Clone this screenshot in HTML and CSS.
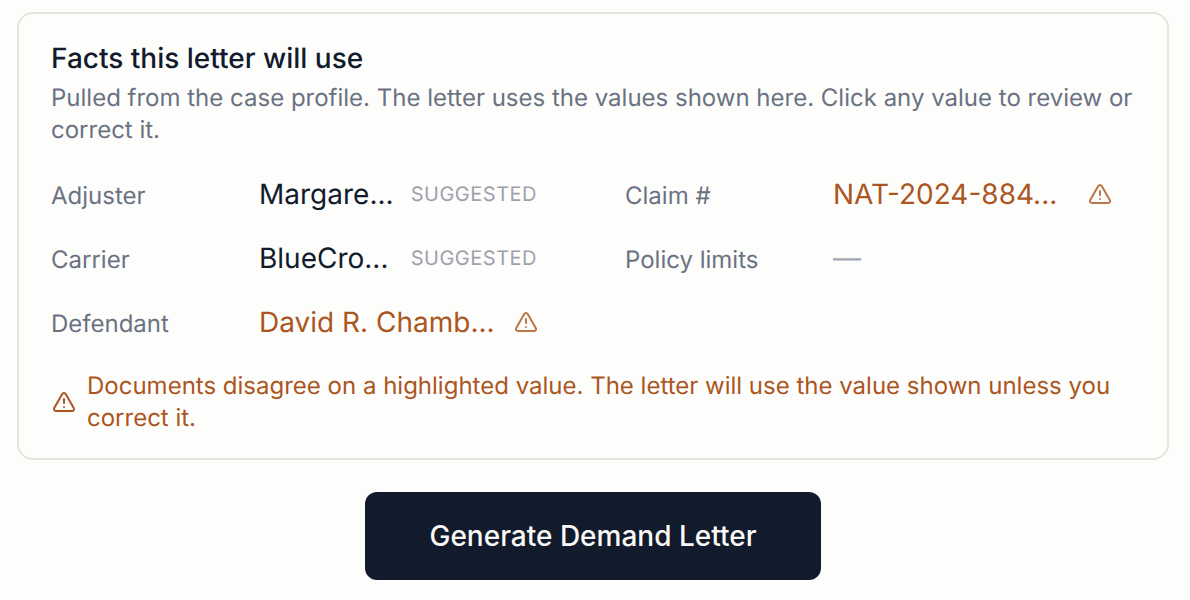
FILE: index.html
```html
<!DOCTYPE html>
<html lang="en">
<head>
  <meta charset="UTF-8">
  <meta name="viewport" content="width=device-width, initial-scale=1">
  <title>Demand Letter</title>
  <link rel="stylesheet" href="styles.css">
</head>
<body>
  <!-- Facts card -->
  <section class="card">
    <h2>Facts this letter will use</h2>
    <p class="intro">Pulled from the case profile. The letter uses the values shown here. Click any value to review or correct it.</p>

    <div class="facts">
      <div class="fact">
        <span class="label">Adjuster</span>
        <span class="value">Margare...</span>
        <span class="tag">SUGGESTED</span>
      </div>
      <div class="fact">
        <span class="label">Claim #</span>
        <span class="value conflict">NAT-2024-884...</span>
        <svg class="icon" viewBox="0 0 24 24"><path d="m21.73 18-8-14a2 2 0 0 0-3.48 0l-8 14A2 2 0 0 0 4 21h16a2 2 0 0 0 1.73-3"/><path d="M12 9v4"/><path d="M12 17h.01"/></svg>
      </div>
      <div class="fact">
        <span class="label">Carrier</span>
        <span class="value">BlueCro...</span>
        <span class="tag">SUGGESTED</span>
      </div>
      <div class="fact">
        <span class="label">Policy limits</span>
        <span class="value empty">—</span>
      </div>
      <div class="fact">
        <span class="label">Defendant</span>
        <span class="value conflict">David R. Chamb...</span>
        <svg class="icon" viewBox="0 0 24 24"><path d="m21.73 18-8-14a2 2 0 0 0-3.48 0l-8 14A2 2 0 0 0 4 21h16a2 2 0 0 0 1.73-3"/><path d="M12 9v4"/><path d="M12 17h.01"/></svg>
      </div>
    </div>

    <div class="notice">
      <svg class="icon" viewBox="0 0 24 24"><path d="m21.73 18-8-14a2 2 0 0 0-3.48 0l-8 14A2 2 0 0 0 4 21h16a2 2 0 0 0 1.73-3"/><path d="M12 9v4"/><path d="M12 17h.01"/></svg>
      <p>Documents disagree on a highlighted value. The letter will use the value shown unless you correct it.</p>
    </div>
  </section>

  <button class="generate-btn">Generate Demand Letter</button>
</body>
</html>
```
FILE: styles.css
```css
* {
  box-sizing: border-box;
  margin: 0;
  padding: 0;
}
body {
  background: #fdfdfc;
  font-family: Inter, "Liberation Sans", sans-serif;
  text-rendering: geometricPrecision;
  color: #121b2b;
  display: flex;
  flex-direction: column;
  align-items: center;
  padding: 12px 21px 20px 17px;
}
/* Facts card */
.card {
  width: 100%;
  height: 448px;
  border: 2px solid #e7e4e0;
  border-radius: 16px;
  padding: 24px 32px;
  margin-bottom: 32px;
}
h2 {
  font-size: 28px;
  font-weight: 500;
  line-height: 40px;
}
.intro {
  margin-top: 4px;
  font-size: 24px;
  line-height: 32px;
  color: #6a7282;
}
.facts {
  display: grid;
  grid-template-columns: 487px 487px;
  column-gap: 87px;
  row-gap: 24px;
  margin-top: 28px;
}
.fact {
  display: flex;
  align-items: center;
  height: 40px;
}
.label {
  width: 208px;
  padding-top: 2px;
  font-size: 24px;
  color: #6a7282;
}
.value {
  flex: 1;
  font-size: 28px;
  white-space: nowrap;
}
.value.conflict,
.notice {
  color: #ab561e;
}
.value.empty {
  color: #a3a8b3;
}
.tag {
  margin-right: 1px;
  font-size: 20px;
  letter-spacing: 0.5px;
  color: #9da1ac;
}
.icon {
  flex: none;
  width: 24px;
  height: 24px;
  fill: none;
  stroke: #ab561e;
  stroke-width: 2;
  stroke-linecap: round;
  stroke-linejoin: round;
}
.fact .icon {
  opacity: 0.8;
}
/* Conflict notice */
.notice {
  display: flex;
  align-items: center;
  gap: 11px;
  margin-top: 28px;
  padding-left: 1px;
  font-size: 24px;
  line-height: 32px;
}
.generate-btn {
  width: 456px;
  height: 88px;
  border: none;
  border-radius: 12px;
  background: #121b2b;
  color: #faf9f7;
  font-family: inherit;
  font-size: 28px;
  font-weight: 500;
  cursor: pointer;
}
```
